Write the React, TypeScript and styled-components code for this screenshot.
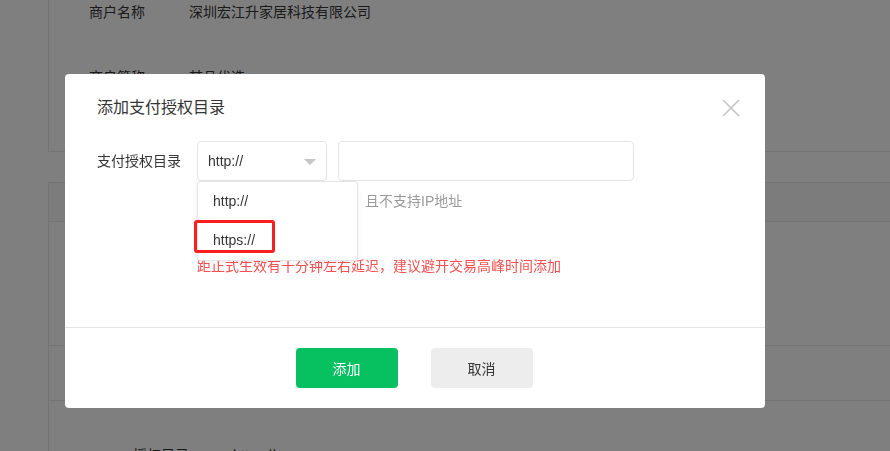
import React from "react";
import styled, { createGlobalStyle } from "styled-components";

const GlobalStyle = createGlobalStyle`
  html, body { margin: 0; padding: 0; background: #fff; }
  body {
    width: 890px; height: 451px; overflow: hidden;
    font-family: "Liberation Sans", "Noto Sans CJK SC", sans-serif;
    font-size: 14px; color: #353535;
  }
  * { box-sizing: border-box; }
`;

/* ---------- background page ---------- */
const Page = styled.div`
  padding-left: 48px;
  width: 890px;
  height: 451px;
  overflow: hidden;
`;

const InfoCard = styled.div`
  border-left: 1px solid #e8e8e8;
  border-bottom: 1px solid #e8e8e8;
  padding: 2px 0 64px 40px;
  display: grid;
  grid-template-columns: 100px 1fr;
  row-gap: 45px;
  line-height: 20px;
`;

const InfoLabel = styled.div`
  color: #353535;
`;

const InfoValue = styled.div`
  color: #353535;
`;

const Table = styled.div`
  margin-top: 30px;
  border-left: 1px solid #e8e8e8;
  border-top: 1px solid #e8e8e8;
`;

const TableRow = styled.div<{ $h: number; $head?: boolean }>`
  height: ${(p) => p.$h}px;
  border-bottom: 1px solid #e8e8e8;
  background: ${(p) => (p.$head ? "#f8f8f8" : "#fff")};
  display: flex;
  align-items: ${(p) => (p.$head ? "center" : "flex-start")};
  padding-top: ${(p) => (p.$head ? 0 : 44)}px;
  padding-left: 84px;
  line-height: 20px;
`;

const Cell = styled.div<{ $w: number }>`
  width: ${(p) => p.$w}px;
  color: #353535;
`;

const Overlay = styled.div`
  position: fixed;
  inset: 0;
  background: rgba(0, 0, 0, 0.5);
`;

/* ---------- dialog ---------- */
const Dialog = styled.div`
  position: fixed;
  left: 65px;
  top: 74px;
  width: 700px;
  height: 334px;
  background: #fff;
  border-radius: 4px;
  display: flex;
  flex-direction: column;
`;

const Header = styled.div`
  height: 46px;
  padding: 22px 25px 0 32px;
  display: flex;
  justify-content: space-between;
  align-items: center;
`;

const Title = styled.div`
  font-size: 16px;
  line-height: 24px;
  color: #353535;
`;

const CloseButton = styled.button`
  border: 0;
  background: none;
  padding: 0;
  width: 18px;
  height: 18px;
  display: flex;
  cursor: pointer;
`;

const Body = styled.div`
  height: 207px;
  padding: 21px 32px 0 32px;
`;

const FormRow = styled.div`
  display: flex;
  align-items: flex-start;
`;

const Label = styled.div`
  width: 100px;
  line-height: 40px;
  color: #353535;
`;

const Field = styled.div`
  display: flex;
  flex-direction: column;
`;

const Controls = styled.div`
  display: flex;
  gap: 11px;
`;

const SelectWrap = styled.div`
  position: relative;
`;

const SelectBox = styled.div`
  width: 130px;
  height: 40px;
  border: 1px solid #e5e5e5;
  border-radius: 4px;
  padding: 0 10px;
  display: flex;
  align-items: center;
  justify-content: space-between;
  color: #353535;
`;

const Caret = styled.span`
  width: 0;
  height: 0;
  border-left: 6px solid transparent;
  border-right: 6px solid transparent;
  border-top: 6px solid #c6c6c6;
  margin-top: 2px;
`;

const Input = styled.input`
  width: 296px;
  height: 40px;
  border: 1px solid #e5e5e5;
  border-radius: 4px;
  outline: none;
  padding: 0 10px;
  font: inherit;
`;

const Menu = styled.div`
  position: absolute;
  top: 100%;
  left: 0;
  width: 161px;
  background: #fff;
  border: 1px solid #e5e5e5;
  border-radius: 3px;
  box-shadow: 0 2px 6px rgba(0, 0, 0, 0.06);
  z-index: 2;
`;

const MenuItem = styled.div`
  height: 39px;
  line-height: 39px;
  padding-left: 15px;
  color: #353535;
`;

const Annotation = styled.div`
  position: absolute;
  left: -4px;
  top: 38px;
  width: 81px;
  height: 33px;
  border: 3px solid #fb1e1e;
  border-radius: 3px;
`;

const Hint = styled.div`
  margin-top: 10px;
  line-height: 20px;
  color: #9a9a9a;
`;

const Warning = styled.div`
  margin-top: 45px;
  line-height: 20px;
  color: #fa4e4e;
`;

const Footer = styled.div`
  border-top: 1px solid #e5e5e5;
  padding: 20px 2px 20px 0;
  display: flex;
  justify-content: center;
  gap: 33px;
`;

const Button = styled.button<{ $primary?: boolean }>`
  width: 102px;
  height: 40px;
  border: 0;
  border-radius: 4px;
  font: inherit;
  font-size: 14px;
  background: ${(p) => (p.$primary ? "#07c160" : "#ededed")};
  color: ${(p) => (p.$primary ? "#fff" : "#353535")};
  cursor: pointer;
`;

export default function App() {
  return (
    <>
      <GlobalStyle />
      <Page>
        <InfoCard>
          <InfoLabel>商户名称</InfoLabel>
          <InfoValue>深圳宏江升家居科技有限公司</InfoValue>
          <InfoLabel>商户简称</InfoLabel>
          <InfoValue>某品优选</InfoValue>
        </InfoCard>
        <Table>
          <TableRow $h={39} $head>
            <Cell $w={150}>序号</Cell>
            <Cell $w={300}>支付授权目录</Cell>
            <Cell $w={150}>操作</Cell>
          </TableRow>
          <TableRow $h={124} />
          <TableRow $h={55} />
          <TableRow $h={80}>
            <Cell $w={100}>授权目录</Cell>
            <Cell $w={200}>https://pay.mp.qq</Cell>
          </TableRow>
        </Table>
      </Page>
      <Overlay />
      <Dialog>
        <Header>
          <Title>添加支付授权目录</Title>
          <CloseButton aria-label="关闭">
            <svg width="18" height="18" viewBox="0 0 18 18">
              <path d="M1 1 L17 17 M17 1 L1 17" stroke="#c4c4c4" strokeWidth="1.6" fill="none" />
            </svg>
          </CloseButton>
        </Header>
        <Body>
          <FormRow>
            <Label>支付授权目录</Label>
            <Field>
              <Controls>
                <SelectWrap>
                  <SelectBox>
                    <span>http://</span>
                    <Caret />
                  </SelectBox>
                  <Menu>
                    <MenuItem>http://</MenuItem>
                    <MenuItem>https://</MenuItem>
                    <Annotation />
                  </Menu>
                </SelectWrap>
                <Input />
              </Controls>
              <Hint>授权目录必须以斜杠结尾，且不支持IP地址</Hint>
              <Warning>距正式生效有十分钟左右延迟，建议避开交易高峰时间添加</Warning>
            </Field>
          </FormRow>
        </Body>
        <Footer>
          <Button $primary>添加</Button>
          <Button>取消</Button>
        </Footer>
      </Dialog>
    </>
  );
}
